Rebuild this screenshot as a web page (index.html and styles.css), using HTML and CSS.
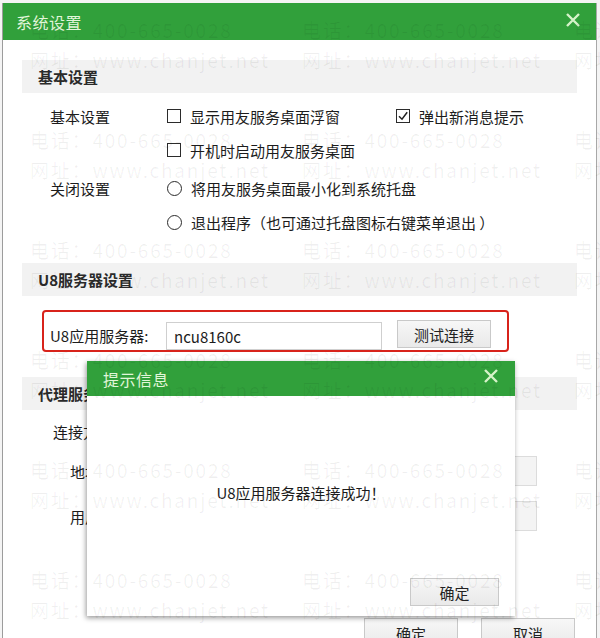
FILE: index.html
```html
<!DOCTYPE html>
<html lang="zh-CN">
<head>
    <meta charset="UTF-8">
    <meta name="viewport" content="width=device-width, initial-scale=1.0">
    <title>系统设置</title>
    <link rel="stylesheet" href="styles.css">
</head>
<body>
    <div class="window">
        <div class="titlebar">
            <span class="title">系统设置</span>
            <svg class="close" width="16" height="16" viewBox="0 0 16 16">
                <path d="M2 2 L14 14 M14 2 L2 14" />
            </svg>
        </div>
        <div class="content">
            <div class="band">基本设置</div>
            <div class="group">
                <div class="row">
                    <span class="label">基本设置</span>
                    <span class="opt wide"><i class="box"></i>显示用友服务桌面浮窗</span>
                    <span class="opt">
                        <i class="box">
                            <svg width="14" height="14" viewBox="0 0 14 14"><path d="M3 7.2 L6 10.2 L11.2 3.2" /></svg>
                        </i>弹出新消息提示
                    </span>
                </div>
                <div class="row">
                    <span class="label"></span>
                    <span class="opt"><i class="box"></i>开机时启动用友服务桌面</span>
                </div>
            </div>
            <div class="group spaced">
                <div class="row">
                    <span class="label">关闭设置</span>
                    <span class="opt"><i class="radio"></i>将用友服务桌面最小化到系统托盘</span>
                </div>
                <div class="row">
                    <span class="label"></span>
                    <span class="opt"><i class="radio"></i>退出程序（也可通过托盘图标右键菜单退出 ）</span>
                </div>
            </div>

            <div class="band second">U8服务器设置</div>
            <div class="server-box">
                <span class="server-label">U8应用服务器:</span>
                <input class="server-input" type="text" value="ncu8160c">
                <button class="btn test-btn">测试连接</button>
            </div>

            <div class="band third">代理服务器设置</div>
            <div class="proxy-row first">
                <span class="proxy-label">连接方式</span>
            </div>
            <div class="proxy-row field">
                <span class="proxy-label">地址：</span>
                <input class="proxy-input" type="text" disabled>
            </div>
            <div class="proxy-row field last">
                <span class="proxy-label">用户名：</span>
                <input class="proxy-input" type="text" disabled>
            </div>

            <div class="footer">
                <button class="btn footer-btn">确定</button>
                <button class="btn footer-btn">取消</button>
            </div>
        </div>
    </div>

    <div class="dialog">
        <div class="titlebar dialog-title">
            <span class="title">提示信息</span>
            <svg class="close" width="16" height="16" viewBox="0 0 16 16">
                <path d="M2 2 L14 14 M14 2 L2 14" />
            </svg>
        </div>
        <div class="dialog-body">
            <div class="message">U8应用服务器连接成功！</div>
            <div class="dialog-footer">
                <button class="btn ok-btn">确定</button>
            </div>
        </div>
    </div>

    <div class="watermark">
        <div class="mark"><span>电话：400-665-0028</span><span>网址：www.chanjet.net</span></div>
        <div class="mark"><span>电话：400-665-0028</span><span>网址：www.chanjet.net</span></div>
        <div class="mark"><span>电话：400-665-0028</span><span>网址：www.chanjet.net</span></div>
        <div class="mark"><span>电话：400-665-0028</span><span>网址：www.chanjet.net</span></div>
        <div class="mark"><span>电话：400-665-0028</span><span>网址：www.chanjet.net</span></div>
        <div class="mark"><span>电话：400-665-0028</span><span>网址：www.chanjet.net</span></div>
        <div class="mark"><span>电话：400-665-0028</span><span>网址：www.chanjet.net</span></div>
        <div class="mark"><span>电话：400-665-0028</span><span>网址：www.chanjet.net</span></div>
        <div class="mark"><span>电话：400-665-0028</span><span>网址：www.chanjet.net</span></div>
        <div class="mark"><span>电话：400-665-0028</span><span>网址：www.chanjet.net</span></div>
        <div class="mark"><span>电话：400-665-0028</span><span>网址：www.chanjet.net</span></div>
        <div class="mark"><span>电话：400-665-0028</span><span>网址：www.chanjet.net</span></div>
        <div class="mark"><span>电话：400-665-0028</span><span>网址：www.chanjet.net</span></div>
        <div class="mark"><span>电话：400-665-0028</span><span>网址：www.chanjet.net</span></div>
        <div class="mark"><span>电话：400-665-0028</span><span>网址：www.chanjet.net</span></div>
        <div class="mark"><span>电话：400-665-0028</span><span>网址：www.chanjet.net</span></div>
        <div class="mark"><span>电话：400-665-0028</span><span>网址：www.chanjet.net</span></div>
        <div class="mark"><span>电话：400-665-0028</span><span>网址：www.chanjet.net</span></div>
    </div>
</body>
</html>
```

FILE: styles.css
```css
:root {
    --green: #31a03b;
    --title-text: #e2f6da;
    --band-bg: #f2f2f2;
    --text-color: #1c1c1c;
    --border-color: #c9c9c9;
    --red: #d8231b;
}

html, body {
    margin: 0;
    padding: 0;
    height: 100%;
    overflow: hidden;
}

body {
    position: relative;
    background-color: #f4f4f4;
    font-family: "Noto Sans CJK SC", "Liberation Sans", sans-serif;
    color: var(--text-color);
    font-size: 15px;
}

.window {
    margin: 3px 0 0 2px;
    width: 593px;
    height: 700px;
    background-color: #ffffff;
    border-left: 1px solid #9c9c9c;
    border-right: 1px solid #a8a8a8;
}

.titlebar {
    height: 37px;
    background-color: var(--green);
    display: flex;
    align-items: center;
    justify-content: space-between;
    padding: 0 15px 0 13px;
}

.title {
    color: var(--title-text);
    font-size: 16px;
    line-height: 1;
    letter-spacing: 0.5px;
}

.close {
    stroke: #d6f3c9;
    stroke-width: 2.4;
    fill: none;
    margin-top: -3px;
}

.content {
    padding: 20px 19px 0 19px;
}

.band {
    height: 33px;
    line-height: 33px;
    background-color: var(--band-bg);
    padding-left: 16px;
    font-weight: bold;
    color: #2a2a2a;
}

.band.second {
    margin-top: 24px;
}

.band.third {
    margin-top: 25px;
}

.group {
    margin-top: 6px;
}

.group.spaced {
    margin-top: 4px;
}

.row {
    display: flex;
    align-items: center;
    height: 34px;
    padding-left: 28px;
}

.label {
    width: 117px;
    flex-shrink: 0;
}

.opt {
    display: flex;
    align-items: center;
    white-space: nowrap;
}

.opt.wide {
    width: 229px;
}

.box {
    width: 12px;
    height: 12px;
    border: 1.5px solid #2b2b2b;
    margin-right: 9px;
    position: relative;
    flex-shrink: 0;
}

.box svg {
    position: absolute;
    left: -1px;
    top: -1px;
    fill: none;
    stroke: #222;
    stroke-width: 1.5;
}

.radio {
    width: 13px;
    height: 13px;
    border: 1.3px solid #2b2b2b;
    border-radius: 50%;
    margin-right: 9px;
    flex-shrink: 0;
}

.server-box {
    margin: 14px 0 0 20px;
    width: 457px;
    height: 38px;
    border: 2px solid var(--red);
    border-radius: 4px;
    display: flex;
    align-items: flex-end;
    padding-left: 6px;
}

.server-label {
    width: 116px;
    line-height: 28px;
}

.server-input {
    width: 216px;
    height: 28px;
    box-sizing: border-box;
    border: 1px solid #cfcfcf;
    padding: 0 7px;
    font-family: inherit;
    font-size: 15px;
    color: var(--text-color);
    outline: none;
}

.btn {
    font-family: inherit;
    font-size: 15px;
    color: #222;
    background: linear-gradient(#f7f7f7, #e9e9e9);
    border: 1px solid var(--border-color);
    padding: 0;
    cursor: pointer;
}

.test-btn {
    width: 94px;
    height: 28px;
    margin-left: 15px;
    margin-bottom: 2px;
}

.proxy-row {
    display: flex;
    align-items: center;
    margin-right: 40px;
}

.proxy-row.first {
    height: 34px;
    margin-top: 4px;
    padding-left: 31px;
}

.proxy-row.field {
    height: 30px;
    margin-top: 8px;
    padding-left: 48px;
}

.proxy-row.field.last {
    margin-top: 15px;
}

.proxy-label {
    width: 90px;
}

.proxy-input {
    flex: 1;
    height: 30px;
    box-sizing: border-box;
    border: 1px solid #dcdcdc;
    background-color: #f4f4f4;
}

.footer {
    display: flex;
    justify-content: flex-end;
    gap: 23px;
    margin-top: 87px;
    padding-right: 2px;
}

.footer-btn {
    width: 94px;
    height: 30px;
}

.dialog {
    position: absolute;
    left: 87px;
    top: 361px;
    width: 428px;
    height: 255px;
    background-color: #ffffff;
    box-shadow: -1px 2px 5px rgba(0, 0, 0, 0.4);
    display: flex;
    flex-direction: column;
}

.dialog-title {
    height: 35px;
    padding: 0 16px 0 16px;
    flex-shrink: 0;
}

.dialog-title .close {
    margin-top: -5px;
}

.dialog-body {
    flex: 1;
    display: flex;
    flex-direction: column;
}

.message {
    flex: 1;
    display: flex;
    align-items: center;
    justify-content: center;
    padding-top: 10px;
}

.dialog-footer {
    display: flex;
    justify-content: flex-end;
    padding: 0 16px 10px 0;
}

.ok-btn {
    width: 89px;
    height: 28px;
}

.watermark {
    position: absolute;
    left: 30px;
    top: 15px;
    display: grid;
    grid-template-columns: repeat(3, 272px);
    grid-auto-rows: 110px;
    pointer-events: none;
    color: rgba(0, 0, 0, 0.06);
    font-size: 19px;
    letter-spacing: 1.8px;
}

.mark span {
    display: block;
    line-height: 30px;
    white-space: nowrap;
}
```
